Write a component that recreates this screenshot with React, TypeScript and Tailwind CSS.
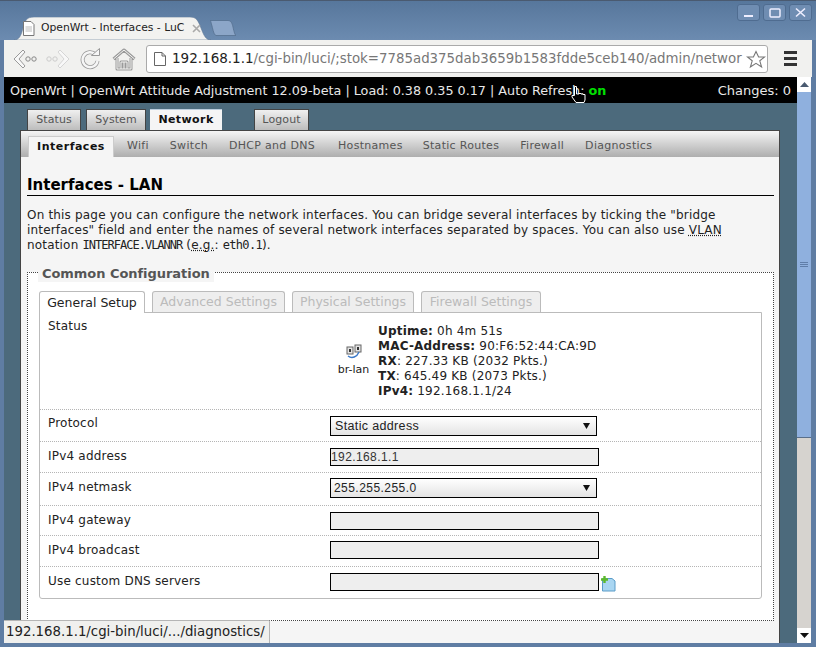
import React from "react";

const dv = { fontFamily: '"DejaVu Sans", sans-serif' };
const mono = { fontFamily: '"DejaVu Sans Mono", monospace' };

function Arrow({ up }: { up?: boolean }) {
  return (
    <div className="w-[14px] h-[15px] bg-white flex items-center justify-center">
      <svg width="9" height="5" viewBox="0 0 9 5">
        {up ? <path d="M4.5 0L9 5H0Z" fill="#4a5a70" /> : <path d="M4.5 5L9 0H0Z" fill="#111" />}
      </svg>
    </div>
  );
}

function Row({ label, h, pt, children, last }: { label: string; h: string; pt: string; children: React.ReactNode; last?: boolean }) {
  return (
    <div className={`flex ${h} ${last ? "" : "border-b border-dotted border-[#b5b5b5]"}`}>
      <div className={`w-[290px] pl-[8px] ${pt} text-[12px] leading-[15px] tracking-[0.2px] text-[#222]`}>{label}</div>
      <div className="flex-1 flex items-start">{children}</div>
    </div>
  );
}

function Select({ value, text }: { value: string; text: string }) {
  return (
    <div className="mt-[6px] w-[267px] h-[20px] border border-black bg-gradient-to-b from-[#ffffff] to-[#e4e4e4] flex items-center justify-between pr-[6px] text-[#222]">
      <span className={text} style={{ fontFamily: '"Liberation Sans", sans-serif' }}>{value}</span>
      <svg width="7" height="6" viewBox="0 0 7 6"><path d="M0 0H7L3.5 6Z" fill="#111" /></svg>
    </div>
  );
}

function Field({ value, mt }: { value?: string; mt: string }) {
  return (
    <input
      readOnly
      value={value ?? ""}
      className={`${mt} w-[269px] h-[18px] border border-black bg-[#eeeeee] px-0 text-[12px] leading-[16px] tracking-[0.4px] text-[#333] outline-none`}
      style={{ fontFamily: '"Liberation Sans", sans-serif' }}
    />
  );
}

function Hollow({ d, w, h, cls, o = "#9a9a9a", i = "#f4f4f2", sw = 4 }: { d: string; w: number; h: number; cls?: string; o?: string; i?: string; sw?: number }) {
  return (
    <svg width={w} height={h} viewBox={`0 0 ${w} ${h}`} className={`shrink-0 ${cls ?? ""}`}>
      <path d={d} fill="none" stroke={o} strokeWidth={sw} strokeLinejoin="round" />
      <path d={d} fill="none" stroke={i} strokeWidth={sw - 2} strokeLinejoin="round" />
    </svg>
  );
}

const tabClass = "h-[21px] pt-[1px] flex items-center justify-center bg-gradient-to-b from-[#f0f0f0] to-[#bdbdbd] border border-b-0 border-[#444]";
const cfgTab = "h-[21px] pt-[1px] flex items-center justify-center bg-[#eeeeee] border border-b-0 border-[#bbb] rounded-t-[3px]";

export default function App() {
  return (
    <div className="relative w-[816px] h-[647px] overflow-hidden flex flex-col bg-[#5f7da3]" style={dv}>
      {/* title bar */}
      <div className="h-[40px] shrink-0 relative border-t border-[#4a5a70] bg-gradient-to-b from-[#57779c] to-[#6c8bb0] pl-[14px] flex items-end">
        <div className="relative h-[23px] w-[197px] flex items-center pl-[8px] gap-[6px] text-[10.8px] text-[#222]">
          <svg width="197" height="23" viewBox="0 0 197 23" className="absolute left-0 top-0">
            <path d="M0 23C5 23 7 19 9 11C11 3 13 0 20 0H176C182 0 184 3 187 11C190 19 192 23 197 23Z" fill="#f2f2f0" stroke="#5d7696" strokeWidth="0.6" />
          </svg>
          <svg width="13" height="15" viewBox="0 0 13 15" className="relative">
            <path d="M1.5.5H9L12 3.5V14.5H1.5Z" fill="#fff" stroke="#777" />
            <path d="M3.5 6H10M3.5 8H10M3.5 10H10" stroke="#bbb" />
          </svg>
          <span className="relative whitespace-nowrap w-[145px]">OpenWrt - Interfaces - LuC</span>
          <svg width="9" height="9" viewBox="0 0 9 9" className="relative">
            <path d="M1 1L8 8M8 1L1 8" stroke="#aaa" strokeWidth="1.6" />
          </svg>
        </div>
        <svg width="26" height="16" viewBox="0 0 26 16" className="mb-[4px] -ml-[1px]">
          <path d="M0 .5H18C21 .5 22 3 23 7C24 12 25 15 26 15.5H6C4 15 3 10 2 6C1 3 1 1 0 .5Z" fill="#8ca6c8" stroke="#55708f" strokeWidth="0.8" />
        </svg>
        <div className="absolute right-[4px] top-[3px] flex gap-[3px]">
          {[
            <path key="a" d="M6 11H15" stroke="#eef" strokeWidth="2" />,
            <rect key="b" x="6" y="4" width="10" height="8" rx="1" fill="none" stroke="#eef" strokeWidth="1.5" />,
            <path key="c" d="M6 3.5L15 11.5M15 3.5L6 11.5" stroke="#eef" strokeWidth="1.6" />,
          ].map((p, i) => (
            <div key={i} className="w-[23px] h-[17px] rounded-[3px] border border-[#4f6c90] bg-[#6f8db2] flex items-center justify-center">
              <svg width="21" height="15" viewBox="0 0 21 15">{p}</svg>
            </div>
          ))}
        </div>
      </div>

      {/* toolbar */}
      <div className="h-[37px] shrink-0 mx-[4px] bg-[#f1f1ef] flex items-center pl-[9px] relative">
        <svg width="25" height="22" viewBox="0 0 25 22" className="shrink-0">
          <path d="M10 2L1 11L10 20L12 18L6 11L12 4Z" fill="#f8f8f8" stroke="#999" strokeLinejoin="round" />
          <circle cx="15" cy="11" r="2.2" fill="none" stroke="#888" />
          <circle cx="21" cy="11" r="2.2" fill="none" stroke="#888" />
        </svg>
        <svg width="25" height="22" viewBox="0 0 25 22" className="ml-[7px] shrink-0">
          <path d="M15 2L24 11L15 20L13 18L19 11L13 4Z" fill="#f8f8f8" stroke="#d5d5d5" strokeLinejoin="round" />
          <circle cx="4" cy="11" r="2.2" fill="none" stroke="#ccc" />
          <circle cx="10" cy="11" r="2.2" fill="none" stroke="#ccc" />
        </svg>
        <svg width="22" height="22" viewBox="0 0 22 22" className="ml-[9px] shrink-0">
          <path d="M16.5 6.5A7.5 7.5 0 1 0 18.5 13" fill="none" stroke="#999" strokeWidth="4" />
          <path d="M16.5 6.5A7.5 7.5 0 1 0 18.5 13" fill="none" stroke="#f6f6f6" strokeWidth="2.4" />
          <path d="M12.5 7.5H20.5V.5Z" fill="#f6f6f6" stroke="#999" strokeLinejoin="round" />
        </svg>
        <Hollow cls="ml-[11px]" w={24} h={24} sw={3} d="M1.5 12L12 3L22.5 12M5 11V22H19V11M9 22V15H15V22M12 15V22" />
        <div className="ml-[10px] w-[622px] h-[28px] shrink-0 bg-white border border-[#aaa] rounded-[3px] flex items-center pl-[7px] overflow-hidden relative">
          <svg width="12" height="14" viewBox="0 0 12 14" className="shrink-0">
            <path d="M.5.5H8L11.5 4V13.5H.5Z" fill="#fff" stroke="#666" />
            <path d="M8 .5V4H11.5" fill="none" stroke="#666" />
          </svg>
          <span className="ml-[6px] w-[574px] overflow-hidden text-[13.5px] whitespace-nowrap text-[#222]">
            192.168.1.1<span className="text-[13.35px] text-[#777]">/cgi-bin/luci/;stok=7785ad375dab3659b1583fdde5ceb140/admin/networ</span>
          </span>
          <svg width="20" height="19" viewBox="0 0 20 19" className="absolute right-[1px] top-[4px]">
            <path d="M10 1.5L12.6 7H18.5L13.8 10.8L15.6 17L10 13.4L4.4 17L6.2 10.8L1.5 7H7.4Z" fill="#fff" stroke="#777" strokeWidth="1.1" />
          </svg>
        </div>
        <div className="ml-[16px] flex flex-col gap-[3px]">
          <div className="w-[13px] h-[3px] bg-[#333]" />
          <div className="w-[13px] h-[3px] bg-[#333]" />
          <div className="w-[13px] h-[3px] bg-[#333]" />
        </div>
      </div>

      {/* viewport */}
      <div className="flex-1 min-h-0 flex pl-[4px] pr-[5px] pb-[4px]">
        <div className="flex-1 min-w-0 bg-[#4c6a7c] flex flex-col overflow-hidden">
          <div className="h-[26px] shrink-0 bg-black flex items-center justify-between pl-[6px] pr-[6px] pt-[1px] text-[12.75px] text-[#e8e8e8] whitespace-nowrap">
            <span>
              OpenWrt | OpenWrt Attitude Adjustment 12.09-beta | Load: 0.38 0.35 0.17 | Auto Refresh: <b className="text-[#00e000]">on</b>
            </span>
            <span className="text-[13px]">Changes: 0</span>
          </div>

          {/* main tabs */}
          <div className="h-[27px] shrink-0 flex items-end pl-[23px] text-[11px] tracking-[0.1px] text-[#555]">
            <div className={`${tabClass} w-[54px]`}>Status</div>
            <div className={`${tabClass} w-[60px] ml-[5px]`}>System</div>
            <div className="h-[21px] pt-[1px] w-[72px] ml-[4px] flex items-center justify-center bg-[#f5f5f5] border-t border-[#bcd] font-bold tracking-[0.4px] text-[#111]">Network</div>
            <div className={`${tabClass} ml-[32px] w-[55px]`}>Logout</div>
          </div>

          {/* panel */}
          <div className="flex-1 min-h-0 ml-[16px] mr-[17px] bg-[#f5f5f5] border-x border-t border-[#444]">
            <div className="h-[26px] bg-gradient-to-b from-[#f5f5f5] to-[#aeaeae] flex items-end pl-[7px] text-[11px] tracking-[0.3px] text-[#555] whitespace-nowrap">
              <div className="h-[21px] w-[86px] flex items-center justify-center bg-[#f5f5f5] border border-b-0 border-[#ccc] font-bold tracking-[0.5px] text-[#111]">Interfaces</div>
              <div className="h-[21px] flex items-center ml-[13px]">Wifi</div>
              <div className="h-[21px] flex items-center ml-[21px]">Switch</div>
              <div className="h-[21px] flex items-center ml-[21px]">DHCP and DNS</div>
              <div className="h-[21px] flex items-center ml-[23px]">Hostnames</div>
              <div className="h-[21px] flex items-center ml-[20px]">Static Routes</div>
              <div className="h-[21px] flex items-center ml-[21px]">Firewall</div>
              <div className="h-[21px] flex items-center ml-[21px]">Diagnostics</div>
            </div>

            <div className="pl-[6px]">
              <h2 className="mt-[17px] h-[22px] w-[747px] text-[15px] leading-[22px] font-bold text-black border-b border-black">Interfaces - LAN</h2>
              <p className="mt-[12px] w-[747px] text-[12px] leading-[15px] tracking-[0.18px] text-[#222]">
                On this page you can configure the network interfaces. You can bridge several interfaces by ticking the "bridge interfaces" field and enter the names of several network interfaces separated by spaces. You can also use <span className="underline decoration-dotted">VLAN</span> notation <code className="text-[12px] tracking-[-0.98px]" style={mono}>INTERFACE.VLANNR</code> (<span className="underline decoration-dotted">e.g.</span>: <code className="text-[12px] tracking-[-0.7px]" style={mono}>eth0.1</code>).
              </p>

              <fieldset className="relative mt-[19px] w-[747px] h-[349px] border border-dotted border-[#444] bg-white">
                <legend className="ml-[11px] px-[4px] h-0" />
                <div className="absolute left-[10px] -top-[8px] px-[4px] bg-[#f5f5f5] text-[13px] leading-[17px] tracking-[-0.05px] font-bold text-[#555]">Common Configuration</div>

                <div className="pt-[18px] pl-[11px]">
                  <div className="flex items-end h-[21px] gap-[7px] text-[12.5px] text-[#bbb]">
                    <div className="relative z-10 h-[22px] pt-[1px] w-[106px] -mb-[1px] flex items-center justify-center bg-white border border-b-0 border-[#bbb] rounded-t-[3px] text-[#222]">General Setup</div>
                    <div className={`${cfgTab} w-[133px]`}>Advanced Settings</div>
                    <div className={`${cfgTab} w-[122px]`}>Physical Settings</div>
                    <div className={`${cfgTab} w-[120px]`}>Firewall Settings</div>
                  </div>
                  <div className="w-[723px] h-[287px] border border-[#bbb] rounded-b-[3px]">
                    <div className="flex h-[97px] border-b border-dotted border-[#b5b5b5]">
                      <div className="w-[290px] pl-[8px] pt-[6px] text-[12px] leading-[15px] tracking-[0.2px] text-[#222]">Status</div>
                      <div className="flex pl-[6px] pt-[11px]">
                        <div className="w-[35px] flex flex-col items-center pt-[20px] text-[11px] leading-[13px] text-[#222]">
                          <svg width="16" height="15" viewBox="0 0 16 15">
                            <rect x="1" y="3" width="6" height="7" fill="#e4e4e4" stroke="#666" />
                            <rect x="9" y="1" width="6" height="7" fill="#e4e4e4" stroke="#666" />
                            <rect x="3" y="5" width="2" height="3" fill="#333" />
                            <rect x="11" y="3" width="2" height="3" fill="#333" />
                            <path d="M2 12C6 15 11 13 13 8" fill="none" stroke="#3a78c8" strokeWidth="1.4" />
                          </svg>
                          <span className="mt-[4px]">br-lan</span>
                        </div>
                        <div className="ml-[7px] text-[12px] leading-[15px] tracking-[0.2px] text-[#222] whitespace-nowrap">
                          <div><b>Uptime:</b> 0h 4m 51s</div>
                          <div><b>MAC-Address:</b> 90:F6:52:44:CA:9D</div>
                          <div><b>RX</b>: 227.33 KB (2032 Pkts.)</div>
                          <div><b>TX</b>: 645.49 KB (2073 Pkts.)</div>
                          <div><b>IPv4:</b> 192.168.1.1/24</div>
                        </div>
                      </div>
                    </div>
                    <Row label="Protocol" h="h-[32px]" pt="pt-[6px]"><Select value="Static address" text="pl-[4px] text-[12.5px] tracking-[0.35px]" /></Row>
                    <Row label="IPv4 address" h="h-[31px]" pt="pt-[7px]"><Field value="192.168.1.1" mt="mt-[6px]" /></Row>
                    <Row label="IPv4 netmask" h="h-[33px]" pt="pt-[7px]">
                      <div className="-mt-[1px]"><Select value="255.255.255.0" text="pl-[3px] text-[12px] tracking-[0.45px]" /></div>
                    </Row>
                    <Row label="IPv4 gateway" h="h-[30px]" pt="pt-[7px]"><Field mt="mt-[6px]" /></Row>
                    <Row label="IPv4 broadcast" h="h-[31px]" pt="pt-[7px]"><Field mt="mt-[5px]" /></Row>
                    <Row label="Use custom DNS servers" h="h-[31px]" pt="pt-[7px]" last>
                      <Field mt="mt-[6px]" />
                      <svg width="15" height="16" viewBox="0 0 15 16" className="mt-[9px] ml-[2px]">
                        <path d="M1.5 2.5H11L14 5V15H1.5Z" fill="#a9d6f2" stroke="#5a9cc8" />
                        <path d="M3.5 0V7M0 3.5H7" stroke="#5cb82c" strokeWidth="2.4" />
                      </svg>
                    </Row>
                  </div>
                </div>
              </fieldset>
            </div>
          </div>
        </div>

        {/* scrollbar */}
        <div className="w-[14px] flex flex-col bg-[#d6d3cf]">
          <Arrow up />
          <div className="h-[346px] bg-[#8fb0de] border-b border-[#5a6f8a] flex items-center justify-center">
            <div className="w-[8px] flex flex-col gap-[1px]">
              <div className="h-[1px] bg-[#5f7da8]" />
              <div className="h-[1px] bg-[#5f7da8]" />
              <div className="h-[1px] bg-[#5f7da8]" />
            </div>
          </div>
          <div className="flex-1" />
          <Arrow />
        </div>
      </div>

      {/* status bubble */}
      <div className="absolute left-[4px] bottom-[4px] w-[266px] h-[23px] bg-[#f0f0ee] border-t border-r border-[#b5b5b5] rounded-tr-[2px] flex items-center pl-[2px] text-[13.3px] text-[#222] whitespace-nowrap">
        192.168.1.1/cgi-bin/luci/.../diagnostics/
      </div>

      {/* mouse pointer */}
      <svg width="16" height="19" viewBox="0 0 16 19" className="absolute left-[571px] top-[85px]">
        <path d="M3.5 1.5H5.5V9H8V8.5H10V9H12V9.5H14V15L13 17.5H5L1 12V10.5H3.5Z" fill="#000" stroke="#fff" strokeWidth="1" />
      </svg>
    </div>
  );
}
